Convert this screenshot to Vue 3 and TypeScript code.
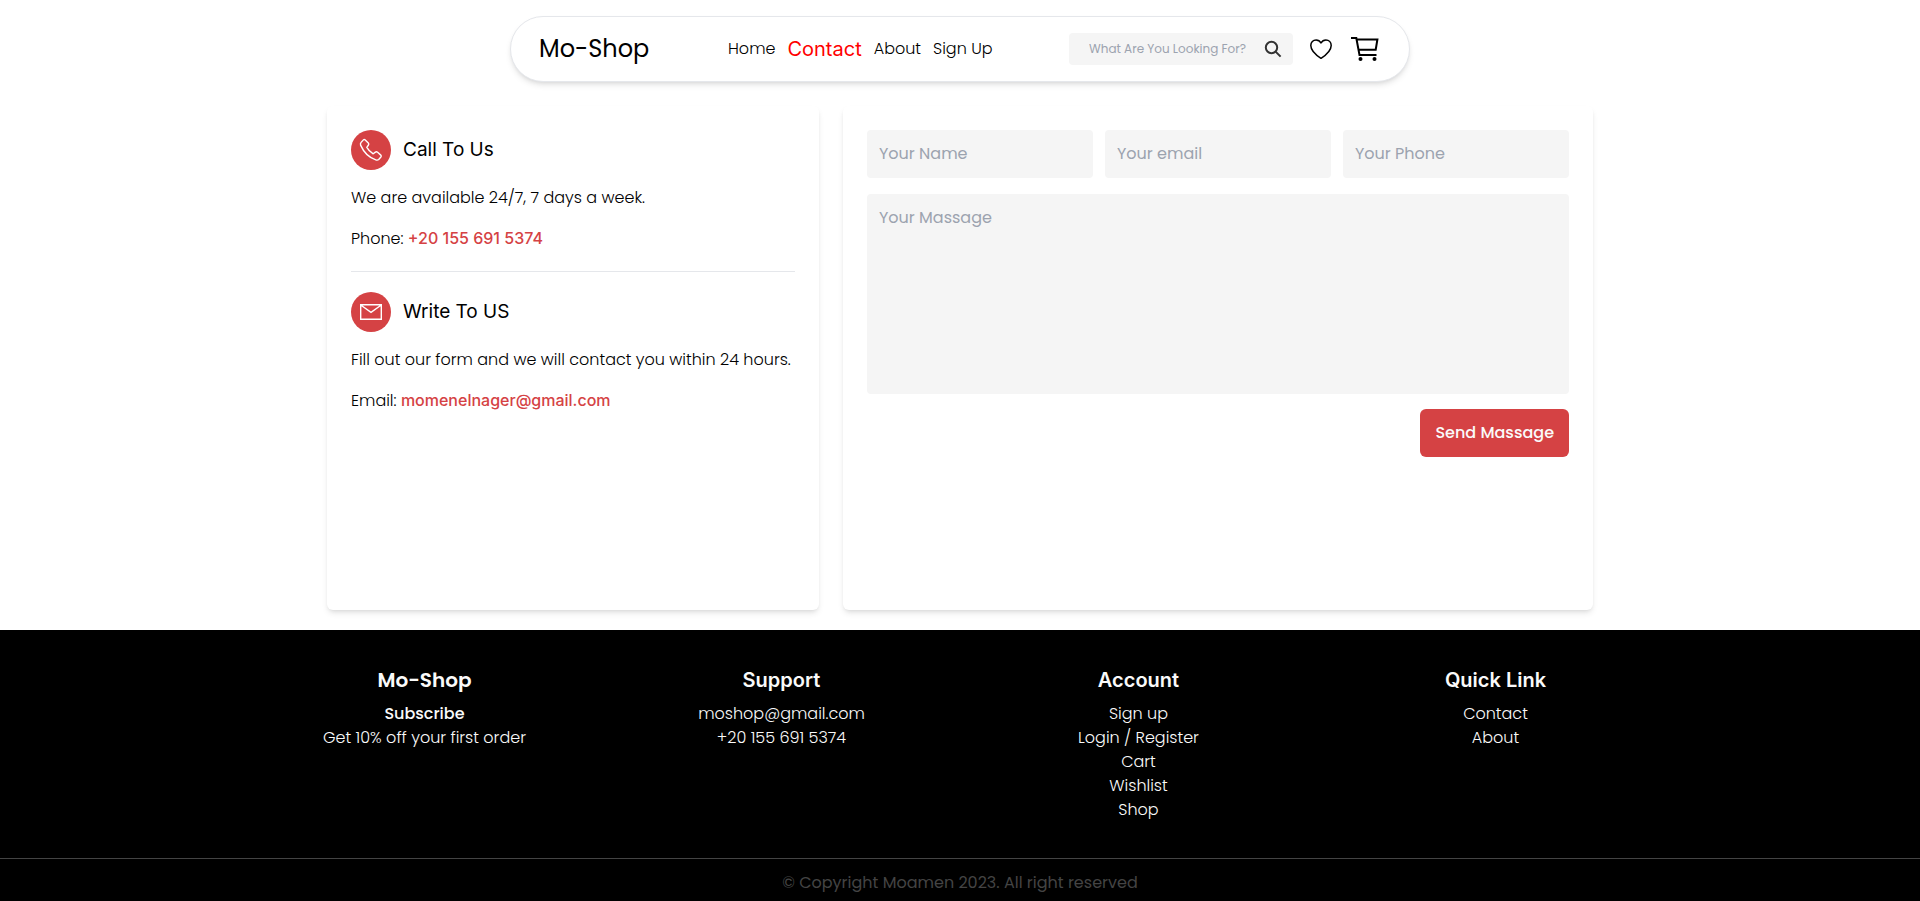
<script setup lang="ts">
import { reactive, ref } from 'vue'

interface NavLink {
  label: string
  active?: boolean
}

interface FooterColumn {
  title: string
  links: string[]
}

const navLinks: NavLink[] = [
  { label: 'Home' },
  { label: 'Contact', active: true },
  { label: 'About' },
  { label: 'Sign Up' },
]

const footerColumns: FooterColumn[] = [
  { title: 'Support', links: ['moshop@gmail.com', '+20 155 691 5374'] },
  { title: 'Account', links: ['Sign up', 'Login / Register', 'Cart', 'Wishlist', 'Shop'] },
  { title: 'Quick Link', links: ['Contact', 'About'] },
]

const search = ref('')
const form = reactive({ name: '', email: '', phone: '', message: '' })
</script>

<template>
  <div class="page">
    <header class="navbar">
      <a class="brand" href="#">Mo-Shop</a>
      <nav class="links" aria-label="Main">
        <a
          v-for="link in navLinks"
          :key="link.label"
          href="#"
          class="link"
          :class="{ active: link.active }"
        >{{ link.label }}</a>
      </nav>
      <div class="actions">
        <form class="search" role="search" @submit.prevent>
          <input v-model="search" type="text" aria-label="Search" placeholder="What Are You Looking For?" />
          <button type="submit" class="icon-button" aria-label="Submit search">
            <svg width="18" height="18" viewBox="0 0 18 18" fill="none" stroke="#333" stroke-width="2">
              <circle cx="7.5" cy="7.5" r="5.7" />
              <path d="M11.6 11.6 16.6 16.6" />
            </svg>
          </button>
        </form>
        <a class="icon-link" href="#" aria-label="Wishlist">
          <svg width="24" height="24" viewBox="0 0 24 24" fill="none" stroke="#000" stroke-width="1.5" stroke-linejoin="round">
            <path d="M12 6C10.9 4 9 2.900 7.100 2.900 4.100 2.900 1.800 5.200 1.800 8.400c0 5.300 5.100 9.500 10.200 12.900 5.100-3.400 10.200-7.600 10.200-12.900 0-3.200-2.300-5.500-5.300-5.500C15 2.900 13.100 4 12 6Z" />
          </svg>
        </a>
        <a class="icon-link" href="#" aria-label="Cart">
          <svg width="28" height="28" viewBox="0 0 28 28" fill="none" stroke="#000" stroke-width="2">
            <path d="M0 3H5.300L8.500 20H25.500M5.700 4.500H26.400L24.700 14.700H7.400" />
            <circle cx="9.500" cy="24" r="2" fill="#000" stroke="none" />
            <circle cx="23.500" cy="24" r="2" fill="#000" stroke="none" />
          </svg>
        </a>
      </div>
    </header>

    <main class="content">
      <section class="card info">
        <div class="heading">
          <span class="badge">
            <svg width="24" height="24" viewBox="0 0 24 24" fill="none" stroke="#fff" stroke-width="1.400" stroke-linejoin="round">
              <path d="M6 1.700 9.300 4.900Q10.300 6 9.300 7.300L7.800 9.300Q10 13.200 14.200 15.800L16.400 14.100Q17.500 13.400 18.600 14.300L21.800 17.100Q22.700 18 21.900 19L19.700 21.500Q18.600 22.500 16.800 21.900 6.500 18.300 1.600 7.100 1.100 5.500 2.100 4.400L4.400 1.900Q5.200 1 6 1.700Z" />
            </svg>
          </span>
          <h2>Call To Us</h2>
        </div>
        <p>We are available 24/7, 7 days a week.</p>
        <p>Phone: <a href="tel:+201556915374">+20 155 691 5374</a></p>
        <hr />
        <div class="heading">
          <span class="badge">
            <svg width="24" height="24" viewBox="0 0 24 24" fill="none" stroke="#fff" stroke-width="1.400">
              <path d="M1.700 4.700H22.300V19.300H1.700ZM1.700 5 12 12.300 22.300 5" />
            </svg>
          </span>
          <h2>Write To US</h2>
        </div>
        <p>Fill out our form and we will contact you within 24 hours.</p>
        <p>Email: <a href="mailto:momenelnager@gmail.com">momenelnager@gmail.com</a></p>
      </section>

      <form class="card message-form" @submit.prevent>
        <div class="fields">
          <input v-model="form.name" type="text" aria-label="Your Name" placeholder="Your Name" />
          <input v-model="form.email" type="email" aria-label="Your email" placeholder="Your email" />
          <input v-model="form.phone" type="tel" aria-label="Your Phone" placeholder="Your Phone" />
        </div>
        <textarea v-model="form.message" aria-label="Your Massage" placeholder="Your Massage"></textarea>
        <button type="submit" class="send">Send Massage</button>
      </form>
    </main>

    <footer class="footer">
      <div class="footer-columns">
        <section>
          <h3 class="footer-brand">Mo-Shop</h3>
          <p class="subscribe">Subscribe</p>
          <p>Get 10% off your first order</p>
        </section>
        <section v-for="column in footerColumns" :key="column.title">
          <h3>{{ column.title }}</h3>
          <ul>
            <li v-for="link in column.links" :key="link"><a href="#">{{ link }}</a></li>
          </ul>
        </section>
      </div>
      <p class="copyright">© Copyright Moamen 2023. All right reserved</p>
    </footer>
  </div>
</template>

<style>
body {
  margin: 0;
  background: #fff;
}
</style>

<style scoped>
*,
*::before,
*::after {
  box-sizing: border-box;
}

.page {
  display: flex;
  flex-direction: column;
  min-height: 100vh;
  font-family: Poppins, Inter, "Open Sans", sans-serif;
  font-size: 16px;
  line-height: 24px;
  color: #000;
}

h2,
h3,
p,
ul {
  margin: 0;
  padding: 0;
}

ul {
  list-style: none;
}

a {
  color: inherit;
  text-decoration: none;
}

input,
textarea,
button {
  border: 0;
  font: inherit;
}

svg {
  display: block;
}

.navbar {
  display: flex;
  align-items: center;
  width: calc(100% - 32px);
  max-width: 900px;
  height: 66px;
  margin: 16px auto 0;
  padding: 0 30px 0 28px;
  border: 1px solid #e5e7eb;
  border-radius: 33px;
  background: #fff;
  box-shadow: 0 4px 6px -1px rgb(0 0 0 / 0.1), 0 2px 4px -2px rgb(0 0 0 / 0.1);
}

.brand {
  flex: 0 0 189px;
  font-size: 24px;
  line-height: 32px;
}

.links {
  display: flex;
  align-items: center;
  gap: 12px;
  font-weight: 300;
}

.link.active {
  font-family: Inter, sans-serif;
  font-size: 20px;
  font-weight: 400;
  color: #f00;
}

.actions {
  display: flex;
  align-items: center;
  gap: 16px;
  margin-left: auto;
}

.icon-link + .icon-link {
  margin-left: 2px;
}

.search {
  display: flex;
  align-items: center;
  width: 224px;
  height: 32px;
  padding: 0 11px 0 20px;
  border-radius: 4px;
  background: #f5f5f5;
}

.search input {
  flex: 1;
  min-width: 0;
  padding: 0;
  font-size: 12px;
  line-height: 16px;
  background: transparent;
}

.icon-button {
  padding: 0;
  background: transparent;
  cursor: pointer;
}

::placeholder {
  color: #9ca3af;
  opacity: 1;
}

.content {
  display: grid;
  grid-template-columns: minmax(0, 492fr) minmax(0, 750fr);
  gap: 24px;
  width: calc(100% - 32px);
  max-width: 1266px;
  min-height: 504px;
  margin: 24px auto 20px;
}

.card {
  padding: 24px;
  border-radius: 6px;
  background: #fff;
  box-shadow: 0 4px 6px -1px rgb(0 0 0 / 0.1), 0 2px 4px -2px rgb(0 0 0 / 0.1);
}

.heading {
  display: flex;
  align-items: center;
  gap: 12px;
}

.heading h2 {
  font-family: Inter, sans-serif;
  font-size: 19px;
  font-weight: 400;
  line-height: 28px;
}

.badge {
  display: grid;
  place-items: center;
  width: 40px;
  height: 40px;
  border-radius: 50%;
  background: #d54244;
}

.info p {
  margin-top: 16px;
  font-weight: 300;
}

.info p a {
  font-family: Inter, sans-serif;
  font-weight: 500;
  color: #d54244;
}

.info hr {
  height: 1px;
  margin: 20px 0;
  border: 0;
  background: #e5e7eb;
}

.message-form {
  display: flex;
  flex-direction: column;
}

.fields {
  display: grid;
  grid-template-columns: repeat(3, minmax(0, 1fr));
  gap: 12px;
}

.fields input,
.message-form textarea {
  width: 100%;
  padding: 12px;
  border-radius: 4px;
  background: #f5f5f5;
}

.fields input {
  height: 48px;
  padding-bottom: 14px;
}

.message-form textarea {
  height: 200px;
  margin: 16px 0 15px;
  resize: none;
}

.send {
  align-self: flex-end;
  padding: 12px 15px;
  border-radius: 6px;
  font-weight: 500;
  color: #fafafa;
  background: #d54244;
  cursor: pointer;
}

.footer {
  flex: 1;
  color: #fafafa;
  background: #000;
  text-align: center;
}

.footer-columns {
  display: grid;
  grid-template-columns: repeat(4, minmax(0, 1fr));
  max-width: 1428px;
  margin: 0 auto;
  padding: 36px 0;
  font-weight: 300;
}

.footer h3 {
  margin-bottom: 8px;
  font-family: Inter, sans-serif;
  font-size: 20px;
  font-weight: 600;
  line-height: 28px;
}

.footer .footer-brand {
  font-family: Poppins, Inter, sans-serif;
}

.footer .subscribe {
  font-weight: 500;
}

.copyright {
  padding: 12px 0 6px;
  border-top: 1px solid #444;
  color: #444;
}
</style>
